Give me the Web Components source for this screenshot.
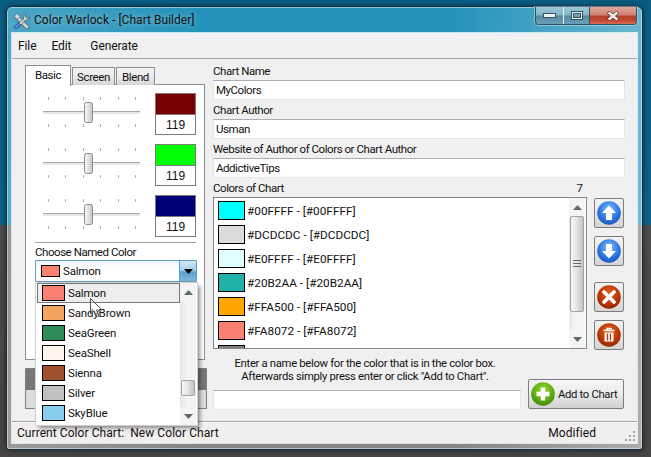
<!DOCTYPE html>
<html><head><meta charset="utf-8">
<style>
html,body{margin:0;padding:0;height:457px;overflow:hidden}
body{background:linear-gradient(180deg,#0b5c82 0,#0d5f86 225px,#4b4b4b 225px,#444 457px);font:11px Roboto,"Liberation Sans",Arial,sans-serif;color:#111;padding:6px;box-sizing:border-box}
</style></head><body>
<cw-window>
  <cw-titlebar slot="title">Color Warlock - [Chart Builder]</cw-titlebar>
  <cw-menubar><span>File</span><span>Edit</span><span>Generate</span></cw-menubar>
  <cw-main>
    <cw-left slot="left">
      <cw-tabs>
        <cw-channel color="#770000">119</cw-channel>
        <cw-channel color="#00ff00">119</cw-channel>
        <cw-channel color="#000077">119</cw-channel>
        <cw-combo color="#fa8072" label="Choose Named Color" value="Salmon">
          <cw-color-item color="#fa8072" selected>Salmon</cw-color-item>
          <cw-color-item color="#f4a460">SandyBrown</cw-color-item>
          <cw-color-item color="#2e8b57">SeaGreen</cw-color-item>
          <cw-color-item color="#fff5ee">SeaShell</cw-color-item>
          <cw-color-item color="#a0522d">Sienna</cw-color-item>
          <cw-color-item color="#c0c0c0">Silver</cw-color-item>
          <cw-color-item color="#87ceeb">SkyBlue</cw-color-item>
        </cw-combo>
      </cw-tabs>
      <cw-shade></cw-shade>
    </cw-left>
    <cw-field label="Chart Name">MyColors</cw-field>
    <cw-field label="Chart Author">Usman</cw-field>
    <cw-field label="Website of Author of Colors or Chart Author">AddictiveTips</cw-field>
    <cw-chart label="Colors of Chart" count="7">
      <cw-list-item color="#00ffff">#00FFFF - [#00FFFF]</cw-list-item>
      <cw-list-item color="#dcdcdc">#DCDCDC - [#DCDCDC]</cw-list-item>
      <cw-list-item color="#e0ffff">#E0FFFF - [#E0FFFF]</cw-list-item>
      <cw-list-item color="#20b2aa">#20B2AA - [#20B2AA]</cw-list-item>
      <cw-list-item color="#ffa500">#FFA500 - [#FFA500]</cw-list-item>
      <cw-list-item color="#fa8072">#FA8072 - [#FA8072]</cw-list-item>
      <cw-list-item color="#808080"></cw-list-item>
    </cw-chart>
    <cw-adder>Enter a name below for the color that is in the color box.<br>Afterwards simply press enter or click "Add to Chart".</cw-adder>
  </cw-main>
  <cw-statusbar><span>Current Color Chart:&nbsp; New Color Chart</span><span slot="right">Modified</span></cw-statusbar>
</cw-window>
<script>
function def(name, css, html){
  customElements.define(name, class extends HTMLElement{
    constructor(){super();this.attachShadow({mode:'open'});}
    connectedCallback(){
      const h=typeof html==='function'?html(this):html;
      this.shadowRoot.innerHTML='<style>'+css+'</style>'+h;
    }
  });
}
const attr=(e,n,d='')=>e.getAttribute(n)??d;

def('cw-window',`
:host{display:flex;flex-direction:column;width:637px;height:444px;box-sizing:border-box;border:1px solid #16303c;border-radius:6px 6px 3px 3px;
 background:linear-gradient(90deg,rgba(255,255,255,.18),rgba(255,255,255,0) 30%,rgba(255,255,255,0) 70%,rgba(255,255,255,.32)),linear-gradient(180deg,#2392ba 0,#2a9ac2 218px,#7d7d7d 218px,#858585 442px);
 box-shadow:0 0 5px rgba(0,0,0,.55),inset 0 0 0 1px rgba(255,255,255,.45);padding:0 5px 6px}
.client{flex:1;display:flex;flex-direction:column;background:#f0f0f0;box-shadow:0 0 0 1px rgba(255,255,255,.75);min-height:0}
`,`<slot name="title"></slot><div class="client"><slot></slot></div>`);

def('cw-titlebar',`
:host{display:flex;align-items:flex-start;height:26px;flex:none}
.ic{margin:6px 3px 0 1px;flex:none}
.t{font:12px/27px Roboto,"Noto Sans",sans-serif;color:#111;text-shadow:0 0 6px rgba(255,255,255,.55);white-space:nowrap;letter-spacing:.03px}
.btns{margin-left:auto;display:flex;height:18px;border:1px solid #2a5568;border-top:0;border-radius:0 0 4px 4px;overflow:hidden;box-sizing:border-box;box-shadow:0 0 0 1px rgba(255,255,255,.35)}
.b{display:flex;align-items:center;justify-content:center;height:100%}
.mn{width:27px;border-right:1px solid #e4f0f4;background:linear-gradient(180deg,#9cc7d6 0,#82b6c9 48%,#55889f 52%,#6a9fb5 100%)}
.mx{width:25px;border-right:1px solid #3a4f58;background:linear-gradient(180deg,#9cc7d6 0,#82b6c9 48%,#55889f 52%,#6a9fb5 100%)}
.cl{width:46px;background:linear-gradient(180deg,#dca79b 0,#cf8372 45%,#b8402a 55%,#c24a32 80%,#d96c50 100%)}
`,`<svg class="ic" width="18" height="16" viewBox="0 0 18 16">
<path d="M3.5 3.5 L14 14" stroke="#56666f" stroke-width="4.4" stroke-linecap="round"/><path d="M3.5 3.5 L14 14" stroke="#cfd7dc" stroke-width="2.6" stroke-linecap="round"/>
<path d="M1 3 L4 .6 L7.4 3.4 L4 6.6Z" fill="#d8dee2" stroke="#55636c" stroke-width=".8"/>
<path d="M12.4 .8 A4 4 0 0 0 11 5.6 L3 12.6 L5.4 15 L12.4 7 A4 4 0 0 0 17 4.2 L14.6 5.6 L12.8 4 Z" fill="#dfe4e8" stroke="#4f5d66" stroke-width=".9" stroke-linejoin="round"/>
<path d="M.8 14 L5.4 9.6 L8 12 L3 16Z" fill="#4a86d2" stroke="#234a80" stroke-width=".7"/></svg>
<span class="t"><slot></slot></span>
<div class="btns">
<div class="b mn"><svg width="13" height="5"><rect x=".5" y=".5" width="12" height="4" fill="#eef3f5" stroke="#33505e"/></svg></div>
<div class="b mx"><svg width="12" height="9"><rect x=".5" y=".5" width="11" height="8" fill="none" stroke="#33505e"/><rect x="1.5" y="1.5" width="9" height="6" fill="none" stroke="#eef3f5"/><rect x="2.5" y="2.5" width="7" height="4" fill="#7aa" fill-opacity=".6" stroke="#33505e"/></svg></div>
<div class="b cl"><svg width="12" height="10" viewBox="0 0 12 10"><path d="M1 1 L11 9 M11 1 L1 9" stroke="#5a3a38" stroke-width="3.6"/><path d="M1.6 1.4 L10.4 8.6 M10.4 1.4 L1.6 8.6" stroke="#f4f4f4" stroke-width="2.4"/></svg></div>
</div>`);

def('cw-menubar',`
:host{display:flex;height:25px;border-bottom:1px solid #a6a6a6;align-items:center;padding:0 0 0 6px;flex:none;font:12px Roboto,"Noto Sans",sans-serif;color:#111;letter-spacing:-.1px}
::slotted(span){margin-right:15px}
::slotted(span:nth-child(2)){margin-right:19px}
`,`<slot></slot>`);

def('cw-main',`
:host{flex:1;display:flex;min-height:0;padding:2px 12px 0 13px;box-sizing:border-box;gap:6px}
.r{flex:1;display:flex;flex-direction:column;min-width:0}
`,`<slot name="left"></slot><div class="r"><slot></slot></div>`);

def('cw-left',`:host{display:flex;flex-direction:column;width:182px;margin-top:3px;gap:8px;flex:none}`,`<slot></slot>`);

def('cw-tabs',`
:host{display:block;height:296px;width:182px}
.hd{display:flex;height:21px;align-items:flex-end;position:relative;z-index:1}
.tab{box-sizing:border-box;border:1px solid #8e8e8e;border-bottom:0;height:18px;margin-left:1px;display:flex;align-items:center;justify-content:center;background:linear-gradient(180deg,#f4f4f4 0,#ebebeb 50%,#d6d6d6 100%);font-size:11.5px;letter-spacing:-.4px}
.tab.on{height:21px;background:#fff;margin-left:0;padding-bottom:3px;width:46px;margin-bottom:-1px}
.p{box-sizing:border-box;height:276px;width:180px;margin-top:-1px;background:#fff;border:1px solid #8e8e8e;padding:8px 8px 0 9px;display:flex;flex-direction:column;gap:9px}
`,`<div class="hd"><div class="tab on">Basic</div><div class="tab" style="width:43px">Screen</div><div class="tab" style="width:39px">Blend</div></div>
<div class="p"><slot></slot></div>`);

def('cw-channel',`
:host{display:flex;padding-left:8px;height:42px;flex:none}
svg{flex:none;display:block}
.box{box-sizing:border-box;width:42px;height:42px;border:1.5px solid #7a7a7a;display:flex;flex-direction:column;background:#fff}
.sw{height:20px;flex:none;border-bottom:1px solid #7a7a7a}
.v{flex:1;display:flex;align-items:center;justify-content:center;font:12px "Liberation Sans",sans-serif}
`,e=>{const xs=[5,22,40,57,75,92];let t='';xs.forEach(x=>{t+=`<path d="M${x}.5 4v3M${x}.5 31v3"/>`});
return `<svg width="112" height="42"><defs><linearGradient id="g" x1="0" y1="0" x2="1" y2="0"><stop offset="0" stop-color="#fbfbfb"/><stop offset="1" stop-color="#c6c6c6"/></linearGradient></defs>
<g stroke="#b0b0b0" fill="none">${t}</g>
<rect x="0" y="18" width="97" height="1" fill="#a8a8a8"/><rect x="0" y="19" width="97" height="2" fill="#e6e8e8"/>
<rect x="41.5" y="9.5" width="8" height="20" rx="2" fill="url(#g)" stroke="#8a8a8a"/></svg>
<div class="box"><div class="sw" style="background:${attr(e,'color')}"></div><div class="v"><slot></slot></div></div>`});

def('cw-scrollbar',`
:host{display:flex;flex-direction:column;width:16px;background:#f0f0f0;flex:none;height:100%}
.a{height:18px;flex:none;display:flex;align-items:center;justify-content:center;background:#f4f4f4}
.tr{flex:1;min-height:0;padding:var(--top,0) 1px 0;background:linear-gradient(90deg,#e6e6e6,#f4f4f4 40%,#f4f4f4)}
.th{box-sizing:border-box;height:var(--h,20px);border:1px solid #a0a4a8;border-radius:2px;background:linear-gradient(90deg,#f6f6f6,#e6e6e6 45%,#c4c4c4);display:flex;align-items:center;justify-content:center}
`,e=>`<div class="a"><svg width="9" height="5"><path d="M4.5 0L9 5H0Z" fill="#5c6a70"/></svg></div>
<div class="tr"><div class="th">${e.hasAttribute('grip')?'<svg width="8" height="8"><path d="M0 .5h8M0 3.5h8M0 6.5h8" stroke="#666"/></svg>':''}</div></div>
<div class="a"><svg width="9" height="5"><path d="M4.5 5L9 0H0Z" fill="#5c6a70"/></svg></div>`);

def('cw-color-item',`
:host{display:flex;align-items:center;height:20px;box-sizing:border-box;padding-left:6px;gap:3px;font-size:11.5px;letter-spacing:-.15px;white-space:nowrap}
:host([selected]){border:1px solid #777;background:#eee;padding-left:4px;margin-left:1px;}
i{display:block;box-sizing:border-box;width:23px;height:16px;border:1px solid #000;flex:none}
`,e=>`<i style="background:${attr(e,'color')}"></i><slot></slot>`);

def('cw-combo',`
:host{display:block;position:relative;flex:none;margin-top:-4px}
hr{border:0;height:1px;background:#a0a0a0;margin:0}
.l{height:17px;line-height:18px;font-size:11.5px;letter-spacing:-.45px}
.c{box-sizing:border-box;width:162px;height:22px;border:1px solid #5f9cc0;background:linear-gradient(180deg,#eef6fb,#fff 40%);display:flex;align-items:center;padding-left:5px;gap:3px;font-size:11.5px;letter-spacing:-.2px;border-radius:1px}
.c i{display:block;box-sizing:border-box;width:19px;height:12px;border:1px solid #000;flex:none}
.b{margin-left:auto;width:16px;height:20px;border-left:1px solid #5f9cc0;background:linear-gradient(180deg,#cfe7f6 0,#a9d2ec 45%,#5c9fcd 55%,#7ab8de 100%);display:flex;align-items:center;justify-content:center}
.d{position:absolute;left:1px;top:41px;width:161px;height:142px;background:#fff;box-shadow:0 0 0 1px #d0d0d0,3px 3px 4px rgba(0,0,0,.45);display:flex;z-index:5}
.its{width:144px;display:flex;flex-direction:column;flex:none}
cw-scrollbar{--top:79px;--h:16px;height:142px}
.cur{position:absolute;left:54px;top:15px;z-index:6}
`,e=>`<hr><div class="l">${attr(e,'label')}</div>
<div class="c"><i style="background:${attr(e,'color')}"></i>${attr(e,'value')}<div class="b"><svg width="9" height="5"><path d="M0 0H9L4.5 5Z" fill="#000"/></svg></div></div>
<div class="d"><div class="its"><slot></slot></div><cw-scrollbar></cw-scrollbar>
<svg class="cur" width="14" height="22" viewBox="0 0 14 22"><path d="M.5 .5V16L4 12.8L6.5 19L9 18L6.6 12H12Z" fill="#fff" fill-opacity=".25" stroke="#4a5560"/></svg></div>`);

def('cw-shade',`
:host{display:block;box-sizing:border-box;width:182px;height:41px;border:1px solid #808080;background:linear-gradient(180deg,#777 0 21px,#dcdcdc 21px)}
`,``);

def('cw-field',`
:host{display:block;flex:none;font-size:11.5px;letter-spacing:-.45px}
.l{height:19px;line-height:20px;white-space:nowrap}
.i{box-sizing:border-box;height:20px;border:1px solid #e2e6ea;border-top-color:#abadb3;background:#fff;line-height:19px;padding-left:2px;border-radius:1px;white-space:nowrap}
`,e=>`<div class="l">${attr(e,'label')}</div><div class="i"><slot></slot></div>`);

def('cw-list-item',`
:host{display:flex;height:24px;gap:2px;flex:none;font:11.8px/20px Roboto,sans-serif;white-space:nowrap}
i{display:block;box-sizing:border-box;width:27px;height:19px;border:1px solid #000;flex:none}
`,e=>`<i style="background:${attr(e,'color')}"></i><slot></slot>`);

def('cw-round-btn',`
:host{display:flex;box-sizing:border-box;width:30px;height:30px;border:1px solid #7c7c7c;border-radius:2px;background:linear-gradient(180deg,#f2f2f2,#e6e6e6 50%,#d4d4d4);align-items:center;justify-content:center;flex:none}
`,e=>{const k=attr(e,'kind');const blue=k==='up'||k==='down';
const c=blue?['#8fc4f6','#2f7ce6','#1a4fb4']:['#e0601f','#bf3a06','#8a2400'];
const g={up:'<path d="M12 4.5L19 12H15V19H9V12H5Z" fill="#fff"/>',down:'<path d="M12 19.5L19 12H15V5H9V12H5Z" fill="#fff"/>',
x:'<path d="M7 7L17 17M17 7L7 17" stroke="#fff" stroke-width="3.8" stroke-linecap="round"/>',
trash:'<path d="M6.5 7.5H17.5M10 7V5.5H14V7" stroke="#fff" stroke-width="1.4" fill="none"/><path d="M7.5 9.5H16.5V18.5H7.5Z" fill="#fff"/><path d="M10.5 10.5V17.5M13.5 10.5V17.5" stroke="#b8380a" stroke-width="1.4"/>'}[k];
return `<svg width="24" height="24" viewBox="0 0 24 24"><defs><radialGradient id="r" cx=".5" cy=".35" r=".7"><stop offset="0" stop-color="${c[0]}"/><stop offset=".55" stop-color="${c[1]}"/><stop offset="1" stop-color="${c[2]}"/></radialGradient></defs><circle cx="12" cy="12" r="11.8" fill="url(#r)"/>${g}</svg>`});

def('cw-chart',`
:host{display:flex;flex-direction:column;flex:none}
.h{height:19px;display:flex;justify-content:space-between;line-height:20px;font-size:11.5px;padding-right:42px}
.h span:first-child{letter-spacing:-.45px}
.b{display:flex;gap:7px;height:152px}
.list{box-sizing:border-box;width:374px;height:152px;border:1px solid #828790;background:#fff;display:flex;overflow:hidden}
.its{flex:1;padding:3px 0 0 4px;display:flex;flex-direction:column;overflow:hidden;min-width:0}
cw-scrollbar{--top:0px;--h:96px;height:150px;margin-right:1px}
.btns{display:flex;flex-direction:column;padding-top:1px;gap:8px}
.sp{height:6px}
`,e=>`<div class="h"><span>${attr(e,'label')}</span><span>${attr(e,'count')}</span></div>
<div class="b"><div class="list"><div class="its"><slot></slot></div><cw-scrollbar grip></cw-scrollbar></div>
<div class="btns"><cw-round-btn kind="up"></cw-round-btn><cw-round-btn kind="down"></cw-round-btn><div class="sp"></div><cw-round-btn kind="x"></cw-round-btn><cw-round-btn kind="trash"></cw-round-btn></div></div>`);

def('cw-adder',`
:host{display:flex;gap:7px;flex:none;align-items:flex-end}
.l{width:308px;flex:none;padding-top:8px}
.t{text-align:center;line-height:13px;font-size:11.3px;letter-spacing:-.32px;height:26px;margin-left:-4px;white-space:nowrap}
.i{box-sizing:border-box;height:20px;margin-top:7px;border:1px solid #e2e6ea;border-top-color:#abadb3;background:#fff;border-radius:1px}
.b{box-sizing:border-box;width:96px;height:30px;margin-bottom:1px;border:1px solid #7c7c7c;border-radius:2px;background:linear-gradient(180deg,#f6f6f6,#ebebeb 50%,#d0d0d0);display:flex;align-items:center;padding-left:2px;gap:3px;font-size:11.3px;letter-spacing:-.33px;white-space:nowrap}
`,`<div class="l"><div class="t"><slot></slot></div><div class="i"></div></div>
<div class="b"><svg width="24" height="24" viewBox="0 0 24 24"><defs><radialGradient id="gr" cx=".5" cy=".35" r=".7"><stop offset="0" stop-color="#a6dc3a"/><stop offset=".6" stop-color="#5cab12"/><stop offset="1" stop-color="#3a800a"/></radialGradient></defs><circle cx="12" cy="12" r="11.8" fill="url(#gr)"/><path d="M12 5.5V18.5M5.5 12H18.5" stroke="#fff" stroke-width="4.4"/></svg>Add to Chart</div>`);

def('cw-statusbar',`
:host{display:flex;height:22px;box-sizing:border-box;border-top:1px solid #a0a0a0;box-shadow:inset 0 1px 0 #fff;background:#f1eeee;align-items:center;padding-left:5px;flex:none;font:12px Roboto,sans-serif;white-space:nowrap;letter-spacing:.06px}
.r{margin-left:auto}
.g{margin-right:1px;align-self:flex-end;margin-left:28px;margin-bottom:1px}
`,`<slot></slot><span class="r"><slot name="right"></slot></span>
<svg class="g" width="12" height="12" fill="#a4a4a4"><rect x="9" y="1" width="2" height="2"/><rect x="5" y="5" width="2" height="2"/><rect x="9" y="5" width="2" height="2"/><rect x="1" y="9" width="2" height="2"/><rect x="5" y="9" width="2" height="2"/><rect x="9" y="9" width="2" height="2"/></svg>`);
</script>
</body></html>
